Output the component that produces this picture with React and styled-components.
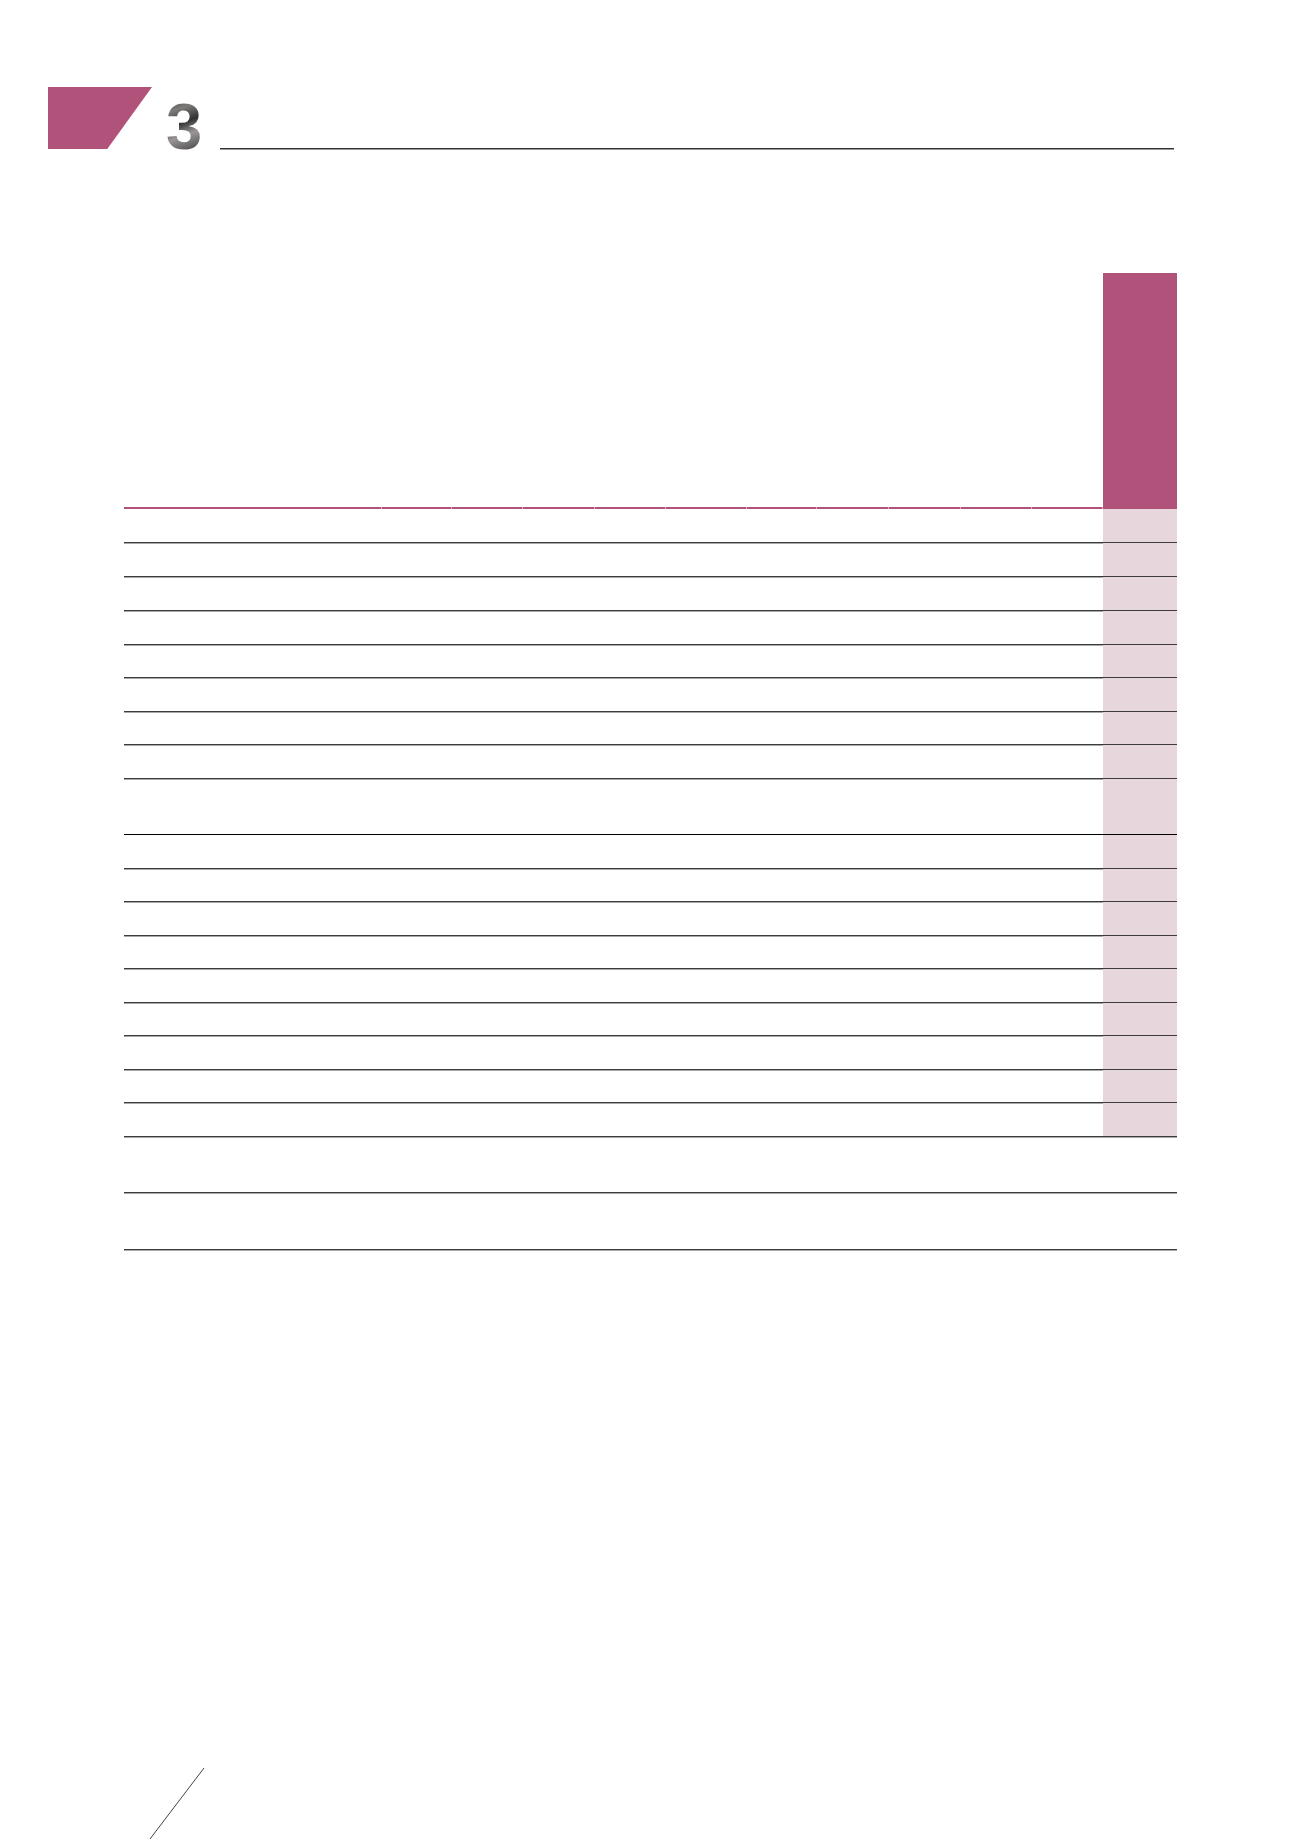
import styled, { createGlobalStyle } from "styled-components";

const GlobalStyle = createGlobalStyle`
  body {
    margin: 0;
    background: #fff;
    font-family: "Liberation Sans", Arial, sans-serif;
  }
`;

const PINK = "#b05279";
const PINK_LIGHT = "#e8d6dd";
const COLS = "258px 70px 71px 72px 71px 81px 70px 72px 72px 71px 71px 74px";

const Page = styled.div`
  width: 1300px;
  min-height: 1839px;
  display: flex;
  flex-direction: column;
  overflow: hidden;
`;

const Header = styled.header`
  display: flex;
  align-items: flex-start;
  height: 62px;
  margin-top: 87px;
  padding-left: 48px;
  padding-right: 126px;
`;

const Tab = styled.div`
  width: 104px;
  height: 62px;
  background: ${PINK};
  clip-path: polygon(0 0, 100% 0, 57% 100%, 0 100%);
  flex-shrink: 0;
`;

const ChapterNo = styled.span`
  display: inline-block;
  margin: 7px 0 0 14px;
  font-family: "Liberation Sans", Arial, sans-serif;
  font-weight: 700;
  font-size: 65px;
  line-height: 65px;
  height: 62px;
  background: linear-gradient(160deg, #2a2a2a 0%, #7e7a7a 26%, #333 46%, #9a9696 64%, #2c2c2c 100%);
  -webkit-background-clip: text;
  background-clip: text;
  color: transparent;
`;

const HeaderRule = styled.div`
  flex: 1;
  align-self: flex-end;
  margin-left: 18px;
  margin-bottom: -1px;
  border-top: 1px solid #333;
  border-bottom: 1px solid #9a9a9a;
`;

const Table = styled.div`
  margin: 124px 0 0 124px;
  width: 1053px;
`;

const Row = styled.div`
  display: grid;
  grid-template-columns: ${COLS};
  height: ${(p) => p.$h}px;
  box-sizing: border-box;
  border-bottom: ${(p) =>
    p.$head ? "none" : p.$strong ? "1px solid #000" : "1px solid #3c3c3c"};
  box-shadow: ${(p) => (p.$head || p.$strong ? "none" : "0 1px 0 #a8a8a8")};
`;

const HeadCell = styled.div`
  background: ${(p) =>
    p.$accent
      ? PINK
      : `linear-gradient(${PINK}, ${PINK}) left bottom / calc(100% - 1px) 2px no-repeat, linear-gradient(#d9a9bd, #d9a9bd) left bottom / 100% 2px no-repeat`};
`;

const Cell = styled.div`
  background: ${(p) => (p.$shade ? PINK_LIGHT : "transparent")};
`;

const Footer = styled.footer`
  margin-top: auto;
  padding-left: 148px;
  height: 71px;
  line-height: 0;
`;

const upper = [34, 34, 34, 34, 33, 34, 33, 34, 56, 34, 33, 34, 33, 34, 33, 34, 33, 34];
const lower = [56, 57];

function DataRow({ h, shade, strong }) {
  return (
    <Row $h={h} $strong={strong}>
      {Array.from({ length: 12 }).map((_, i) => (
        <Cell key={i} $shade={shade && i === 11} />
      ))}
    </Row>
  );
}

export default function App() {
  return (
    <Page>
      <GlobalStyle />
      <Header>
        <Tab />
        <ChapterNo>3</ChapterNo>
        <HeaderRule />
      </Header>

      <Table>
        <Row $h={236} $head>
          {Array.from({ length: 12 }).map((_, i) => (
            <HeadCell key={i} $accent={i === 11} />
          ))}
        </Row>
        {upper.map((h, i) => (
          <DataRow key={"u" + i} h={h} shade strong={i === 8} />
        ))}
        {lower.map((h, i) => (
          <DataRow key={"l" + i} h={h} />
        ))}
      </Table>

      <Footer>
        <svg width="60" height="71" viewBox="0 0 60 71">
          <line x1="56" y1="0" x2="2" y2="71" stroke="#444" strokeWidth="1" />
        </svg>
      </Footer>
    </Page>
  );
}
